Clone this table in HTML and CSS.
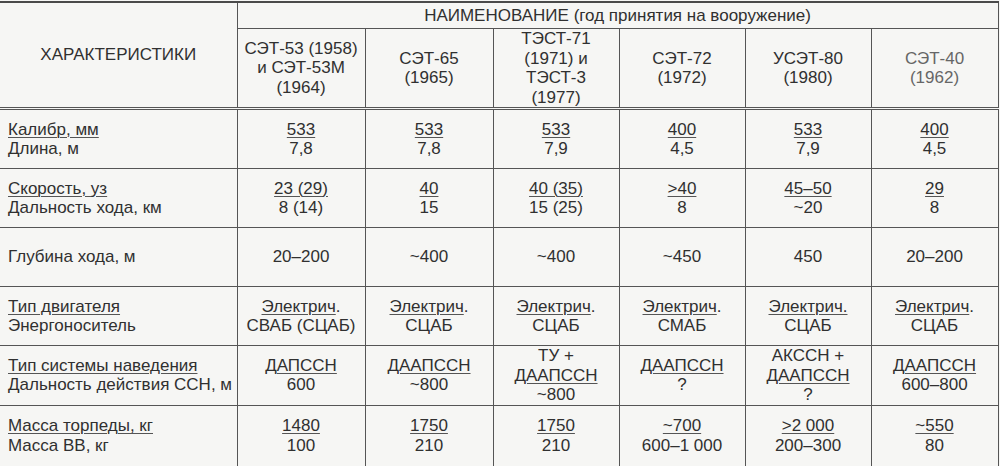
FILE: index.html
```html
<!DOCTYPE html>
<html lang="ru">
<head>
<meta charset="utf-8">
<title>Характеристики торпед</title>
<link rel="stylesheet" href="styles.css">
</head>
<body>
<table class="spec">
  <colgroup>
    <col class="c-label">
    <col class="c-a">
    <col class="c-a">
    <col class="c-b">
    <col class="c-b">
    <col class="c-b">
    <col class="c-c">
  </colgroup>
  <thead>
    <tr class="h-top">
      <th class="label-head" rowspan="2">ХАРАКТЕРИСТИКИ</th>
      <th class="group-head" colspan="6">НАИМЕНОВАНИЕ (год принятия на вооружение)</th>
    </tr>
    <tr class="h-names">
      <th>СЭТ-53 (1958)<br>и СЭТ-53М<br>(1964)</th>
      <th>СЭТ-65<br>(1965)</th>
      <th>ТЭСТ-71<br>(1971) и<br>ТЭСТ-3<br>(1977)</th>
      <th>СЭТ-72<br>(1972)</th>
      <th>УСЭТ-80<br>(1980)</th>
      <th class="faint">СЭТ-40<br>(1962)</th>
    </tr>
  </thead>
  <tbody>
    <tr>
      <td class="label"><u>Калибр, мм</u><br>Длина, м</td>
      <td><u>533</u><br>7,8</td>
      <td><u>533</u><br>7,8</td>
      <td><u>533</u><br>7,9</td>
      <td><u>400</u><br>4,5</td>
      <td><u>533</u><br>7,9</td>
      <td><u>400</u><br>4,5</td>
    </tr>
    <tr>
      <td class="label"><u>Скорость, уз</u><br>Дальность хода, км</td>
      <td><u>23 (29)</u><br>8 (14)</td>
      <td><u>40</u><br>15</td>
      <td><u>40 (35)</u><br>15 (25)</td>
      <td><u>&gt;40</u><br>8</td>
      <td><u>45–50</u><br>~20</td>
      <td><u>29</u><br>8</td>
    </tr>
    <tr>
      <td class="label">Глубина хода, м</td>
      <td>20–200</td>
      <td>~400</td>
      <td>~400</td>
      <td>~450</td>
      <td>450</td>
      <td>20–200</td>
    </tr>
    <tr>
      <td class="label"><u>Тип двигателя</u><br>Энергоноситель</td>
      <td><u>Электрич</u>.<br>СВАБ (СЦАБ)</td>
      <td><u>Электрич</u>.<br>СЦАБ</td>
      <td><u>Электрич</u>.<br>СЦАБ</td>
      <td><u>Электрич</u>.<br>СМАБ</td>
      <td><u>Электрич.</u><br>СЦАБ</td>
      <td><u>Электрич</u>.<br>СЦАБ</td>
    </tr>
    <tr>
      <td class="label"><u>Тип системы наведения</u><br>Дальность действия ССН, м</td>
      <td><u>ДАПССН</u><br>600</td>
      <td><u>ДААПССН</u><br>~800</td>
      <td>ТУ +<br><u>ДААПССН</u><br>~800</td>
      <td><u>ДААПССН</u><br>?</td>
      <td>АКССН +<br><u>ДААПССН</u><br>?</td>
      <td><u>ДААПССН</u><br>600–800</td>
    </tr>
    <tr class="last">
      <td class="label"><u>Масса торпеды, кг</u><br>Масса ВВ, кг</td>
      <td><u>1480</u><br>100</td>
      <td><u>1750</u><br>210</td>
      <td><u>1750</u><br>210</td>
      <td><u>~700</u><br>600–1 000</td>
      <td><u>&gt;2 000</u><br>200–300</td>
      <td><u>~550</u><br>80</td>
    </tr>
  </tbody>
</table>
</body>
</html>
```

FILE: styles.css
```css
html, body {
  margin: 0;
  padding: 0;
  background: #f6f6f4;
}

body {
  font-family: "Liberation Sans", Arial, sans-serif;
  font-size: 17px;
  line-height: 19.5px;
  color: #303030;
  overflow: hidden;
}

.spec {
  width: 998px;
  margin-top: 1px;
  border-collapse: collapse;
  table-layout: fixed;
  border-top: 2px solid #4a4a4a;
}

.c-label { width: 237px; }
.c-a { width: 128px; }
.c-b { width: 126px; }
.c-c { width: 127px; }

.spec th,
.spec td {
  padding: 0;
  font-weight: normal;
  text-align: center;
  vertical-align: middle;
  border-right: 1px solid #555;
  border-bottom: 1px solid #555;
}

.h-top th {
  height: 25px;
}

.group-head {
  padding-top: 2px;
}

.h-names th {
  height: 78px;
  border-bottom: 3px double #555;
}

.label-head {
  border-bottom: 3px double #555 !important;
}

.faint {
  color: #666;
}

.spec tbody td {
  height: 58px;
}

.spec td.label {
  text-align: left;
  padding-left: 8px;
}

.spec tr.last td {
  border-bottom: none;
  height: 60px;
}

.spec u {
  text-decoration-color: #555;
  text-decoration-thickness: 1px;
  text-underline-offset: 2px;
}
```
